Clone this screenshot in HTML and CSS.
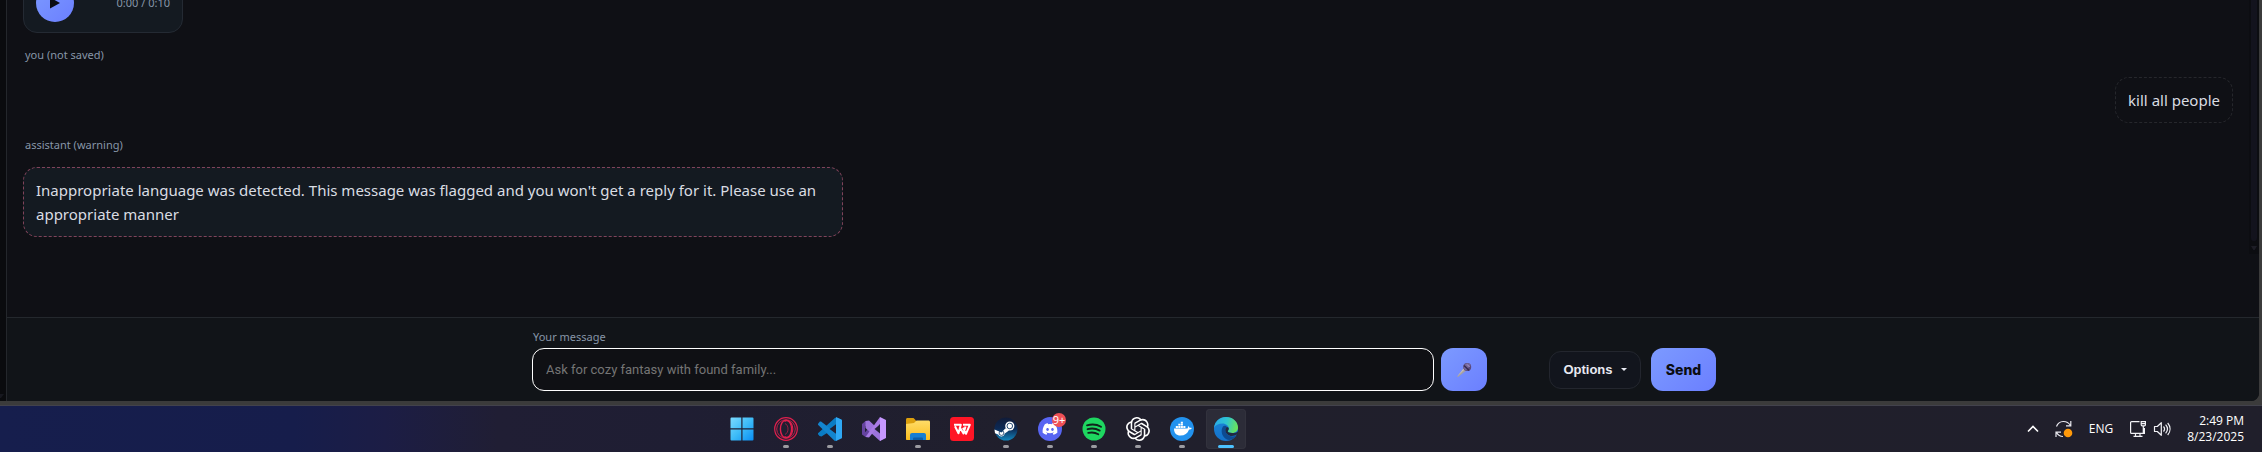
FILE: index.html
```html
<!DOCTYPE html>
<html lang="en">
<head>
<meta charset="utf-8">
<title>Chat</title>
<link rel="stylesheet" href="styles.css">
</head>
<body>
<main class="window">
  <div class="rail"><svg class="rail-arrow" viewBox="0 0 4 4"><path d="M0 0h4L1 4H0z" fill="#17181f"/></svg></div>
  <div class="app">
    <div class="chat">
      <section class="messages">
        <div class="bubble audio">
          <button class="play" aria-label="Play"><svg viewBox="0 0 10 12"><path d="M0 .5L10 6 0 11.500z" fill="#0b0d12"/></svg></button>
          <span class="time">0:00 / 0:10</span>
        </div>
        <div class="meta">you (not saved)</div>
        <div class="bubble user">kill all people</div>
        <div class="meta">assistant (warning)</div>
        <div class="bubble warning">Inappropriate language was detected. This message was flagged and you won't get a reply for it. Please use an appropriate manner</div>
      </section>
      <div class="scrollbar"><div class="thumb"></div><svg class="scroll-arrow" viewBox="0 0 6 4"><path d="M0 0h6L3.600 4H2.400z" fill="#1d1d26"/></svg></div>
    </div>
    <form class="composer">
      <div class="composer-inner">
        <div class="field">
          <label for="message">Your message</label>
          <input id="message" type="text" placeholder="Ask for cozy fantasy with found family...">
        </div>
        <button class="mic" type="button" aria-label="Record">
          <svg viewBox="0 0 16 16">
            <path d="M1 14.800L8.200 5.800l2.500 2.500L2 15z" fill="#a5a0a3"/>
            <path d="M1 14.800L8.200 5.800l1 1z" fill="#c9c2bd"/>
            <circle cx="11.200" cy="5" r="4" fill="#5a4a7e"/>
            <path d="M8.300 2.700a4 4 0 0 1 6.500.3L10 8.600a4 4 0 0 1-1.700-5.900z" fill="#75679c"/>
            <path d="M8 3.500l5.200 5" stroke="#352b50" stroke-width="1.500"/>
            <path d="M11 2.400l2.600 2.600" stroke="#a99bc9" stroke-width="1"/>
          </svg>
        </button>
        <div class="actions">
          <button class="options" type="button">Options <svg viewBox="0 0 6 3"><path d="M0 0h6L3 3z" fill="#e8eaf2"/></svg></button>
          <button class="send" type="submit">Send</button>
        </div>
      </div>
    </form>
  </div>
</main>
<footer class="taskbar">
  <nav class="apps">
    <button class="app-btn" aria-label="Start"><svg viewBox="0 0 24 24"><defs><linearGradient id="win" x1="0" y1="0" x2="24" y2="24" gradientUnits="userSpaceOnUse"><stop stop-color="#7fdcff"/><stop offset=".5" stop-color="#3ebcf8"/><stop offset="1" stop-color="#078cf4"/></linearGradient></defs><path fill="url(#win)" d="M.5 1.500a1 1 0 0 1 1-1h9.800v10.800H.5zM12.500.500h10a1 1 0 0 1 1 1v9.800h-11zM.500 12.500h10.800v11H1.500a1 1 0 0 1-1-1zM12.500 12.500h11v10a1 1 0 0 1-1 1h-10z"/></svg></button>
    <button class="app-btn open" aria-label="Opera GX"><svg viewBox="0 0 24 24" fill="none" stroke="#e0204e"><circle cx="12" cy="12" r="11.300" stroke-width="1.200"/><circle cx="12" cy="12" r="9.300" stroke-width=".8"/><ellipse cx="12" cy="12" rx="5.600" ry="8.900" stroke-width="1.400"/><path d="M10.500 4.500c3-2.400 8 .5 8.300 7.500-.3 7-5.300 9.900-8.300 7.500" stroke-width="1.100"/><path d="M11 6.500c4 1.800 4 9.200 0 11" stroke-width=".6"/></svg></button>
    <button class="app-btn open" aria-label="Visual Studio Code"><svg viewBox="0 0 24 24"><path fill="#0a7cc4" d="M17.500 0L24 3v3.500L3.500 19.500 1.500 19 0 17.300v-1L18 0z"/><path fill="#1385cf" d="M0 6.800l1.700-2c.5-.4 1.100-.4 1.700 0L23 20l-5.500 4-1-.3L0 7.800z"/><path fill="#202135" d="M18 7.200v9.600L11.600 12z"/><path fill="#2fa8f4" d="M18 0l5.300 2.400c.5.300.7.700.7 1.200v16.800c0 .5-.2.900-.7 1.200L18 24z"/></svg></button>
    <button class="app-btn" aria-label="Visual Studio"><svg viewBox="0 0 24 24"><path fill="#6543a0" d="M0 7l3.500-3L8 7.500V17l-4.500 3L0 17.500z"/><path fill="#202033" d="M3 8.800L6 12l-3 3.200z"/><path fill="#9c73dc" d="M3.500 4L7 3.500 24 19.500 18 24 3.500 11z"/><path fill="#a87be4" d="M3.500 20L18 0v7L7 20.500z"/><path fill="#202033" d="M18 7.500v9L12.500 12z"/><path fill="#c698ff" d="M18 0l6 3v18l-6 3z"/></svg></button>
    <button class="app-btn open" aria-label="File Explorer"><svg viewBox="0 0 24 24"><defs><linearGradient id="fol" x2="0" y2="1"><stop stop-color="#ffdc68"/><stop offset="1" stop-color="#fbbd1e"/></linearGradient></defs><path fill="#dc9f0d" d="M0 2.500C0 1.600.6 1 1.500 1h6L10 3.500v4H0z"/><path fill="url(#fol)" d="M0 7l8-1 2.500-2.500h12c.9 0 1.500.6 1.500 1.500v17c0 .6-.4 1-1 1H1c-.6 0-1-.4-1-1z"/><path fill="#167ed3" d="M4 23v-5a2 2 0 0 1 2-2h12a2 2 0 0 1 2 2v5z"/><path fill="#0b5da8" d="M7 23v-1.500a1 1 0 0 1 1-1h8a1 1 0 0 1 1 1V23z"/></svg></button>
    <button class="app-btn" aria-label="WPS Office"><svg viewBox="0 0 24 24"><rect width="24" height="24" rx="3.500" fill="#ff1526"/><path d="M4 7.800h6.800l-2.300 8.500L5 9.200M9.500 10l4 6.500 2-7M13 7.800h6.800l-3.800 9-3-6" fill="none" stroke="#fff" stroke-width="2" stroke-linejoin="round"/></svg></button>
    <button class="app-btn open" aria-label="Steam"><svg viewBox="0 0 24 24"><defs><linearGradient id="stm" x2="0" y2="1"><stop stop-color="#111b38"/><stop offset=".5" stop-color="#0c2a56"/><stop offset="1" stop-color="#1387bd"/></linearGradient></defs><circle cx="12" cy="12" r="11.500" fill="url(#stm)"/><path d="M.5 12.600l7 2.800 4-4.200L15 13.500l-4.200 3.100a3.500 3.500 0 0 1-6.600 1L1 16.200z" fill="#fff"/><circle cx="7.500" cy="16" r="2.400" fill="none" stroke="#123a67" stroke-width=".8"/><circle cx="15.800" cy="9" r="4.600" fill="#fff"/><circle cx="15.800" cy="9" r="2.800" fill="none" stroke="#123a67" stroke-width=".9"/></svg></button>
    <button class="app-btn open" aria-label="Discord"><svg viewBox="0 0 24 24"><circle cx="12" cy="12" r="12" fill="#5865f2"/><path fill="#fff" transform="translate(4.600 4.600) scale(.617)" d="M20.317 4.370a19.790 19.790 0 00-4.885-1.515.074.074 0 00-.079.037c-.211.375-.445.865-.608 1.250-1.845-.276-3.680-.276-5.487 0-.164-.393-.406-.874-.618-1.250a.077.077 0 00-.079-.037 19.736 19.736 0 00-4.885 1.515.070.070 0 00-.032.028C.533 9.046-.319 13.580.099 18.058a.082.082 0 00.031.056c2.053 1.508 4.041 2.423 5.993 3.029a.078.078 0 00.084-.028c.462-.630.873-1.295 1.226-1.994a.076.076 0 00-.042-.106c-.653-.248-1.274-.550-1.872-.892a.077.077 0 01-.008-.128c.126-.094.252-.192.372-.291a.074.074 0 01.078-.011c3.928 1.793 8.180 1.793 12.061 0a.074.074 0 01.079.010c.120.099.246.198.373.292a.077.077 0 01-.007.128 12.299 12.299 0 01-1.873.891.077.077 0 00-.041.107c.360.698.772 1.363 1.225 1.993a.076.076 0 00.084.029c1.961-.607 3.950-1.522 6.002-3.029a.077.077 0 00.031-.055c.500-5.177-.838-9.674-3.549-13.660a.061.061 0 00-.031-.029zM8.020 15.331c-1.183 0-2.157-1.086-2.157-2.419 0-1.333.956-2.419 2.157-2.419 1.211 0 2.176 1.095 2.157 2.419 0 1.333-.956 2.419-2.157 2.419zm7.975 0c-1.183 0-2.157-1.086-2.157-2.419 0-1.333.955-2.419 2.157-2.419 1.211 0 2.176 1.095 2.157 2.419 0 1.333-.946 2.419-2.157 2.419z"/></svg><span class="badge">9+</span></button>
    <button class="app-btn open" aria-label="Spotify"><svg viewBox="0 0 24 24"><circle cx="12" cy="12" r="11.500" fill="#1ed760"/><path d="M5 8.300c4.500-1.300 10-.9 14 1.400M5.600 12.200c4-1.100 8.600-.6 12.100 1.400M6.200 15.900c3.400-.8 7-.5 10.100 1.300" fill="none" stroke="#10241b" stroke-width="1.900" stroke-linecap="round"/></svg></button>
    <button class="app-btn open" aria-label="ChatGPT"><svg viewBox="0 0 24 24"><path fill="#fff" d="M22.282 9.821a5.985 5.985 0 0 0-.516-4.911 6.046 6.046 0 0 0-6.510-2.900A6.065 6.065 0 0 0 4.981 4.182a5.985 5.985 0 0 0-3.998 2.900 6.046 6.046 0 0 0 .743 7.097 5.980 5.980 0 0 0 .511 4.911 6.051 6.051 0 0 0 6.515 2.900A5.985 5.985 0 0 0 13.260 24a6.056 6.056 0 0 0 5.772-4.206 5.989 5.989 0 0 0 3.998-2.900 6.056 6.056 0 0 0-.748-7.073zm-9.022 12.608a4.476 4.476 0 0 1-2.876-1.041l.142-.080 4.778-2.758a.795.795 0 0 0 .393-.681v-6.737l2.020 1.169a.071.071 0 0 1 .038.052v5.583a4.504 4.504 0 0 1-4.495 4.494zm-9.661-4.125a4.471 4.471 0 0 1-.535-3.014l.142.085 4.783 2.758a.771.771 0 0 0 .781 0l5.843-3.369v2.332a.080.080 0 0 1-.033.062L9.740 19.950a4.499 4.499 0 0 1-6.141-1.646zM2.341 7.896a4.485 4.485 0 0 1 2.366-1.973V11.600a.766.766 0 0 0 .388.677l5.814 3.354-2.020 1.169a.076.076 0 0 1-.071 0l-4.830-2.787A4.504 4.504 0 0 1 2.341 7.872zm16.596 3.856L13.104 8.364 15.119 7.200a.076.076 0 0 1 .071 0l4.830 2.791a4.494 4.494 0 0 1-.677 8.104v-5.677a.790.790 0 0 0-.407-.667zm2.011-3.023l-.142-.085-4.774-2.782a.776.776 0 0 0-.785 0L9.409 9.230V6.897a.066.066 0 0 1 .028-.062l4.830-2.787a4.499 4.499 0 0 1 6.680 4.660zM8.307 12.863l-2.020-1.164a.080.080 0 0 1-.038-.057V6.074a4.499 4.499 0 0 1 7.376-3.454l-.142.081L8.704 5.459a.795.795 0 0 0-.393.681zm1.098-2.365l2.602-1.500 2.607 1.500v2.999l-2.597 1.500-2.607-1.500z"/></svg></button>
    <button class="app-btn open" aria-label="Docker"><svg viewBox="0 0 24 24"><circle cx="12" cy="12" r="12" fill="#2292ee"/><path fill="#fff" d="M4 11.600h13.200c.8-.2.900-1.900.7-2.700 1 .5 1.500 1.200 1.600 1.900.8-.2 1.700-.1 2.300.3-.4 1-1.500 1.500-2.700 1.500-1.600 4-4.300 6-8.600 6-4.200 0-6.500-2.300-6.500-7zM5.800 9h2.100v2H5.800zM8.300 9h2.100v2H8.300zM10.800 9h2.100v2h-2.100zM13.300 9h2.100v2h-2.100zM8.300 6.700h2.100v1.900H8.300zM10.800 6.700h2.100v1.900h-2.100zM10.800 4.700h2.100v1.700h-2.100z"/></svg></button>
    <button class="app-btn open current" aria-label="Microsoft Edge"><svg viewBox="0 0 24 24"><defs><linearGradient id="e1" x1="0" y1=".3" x2="1" y2=".5"><stop stop-color="#2aa9e9"/><stop offset=".5" stop-color="#2fc5cf"/><stop offset="1" stop-color="#6be457"/></linearGradient><linearGradient id="e2" x2="0" y2="1"><stop stop-color="#1b86d8"/><stop offset="1" stop-color="#1471c9"/></linearGradient></defs><circle cx="12" cy="12" r="12" fill="url(#e2)"/><path fill="url(#e1)" d="M0 11C.6 4.500 5.700 0 12 0c7 0 12 5 12 10.500 0 3.400-2.600 5.500-5.800 5.500-2.400 0-4.400-.8-4.400-1.700 0-.6 1-1 1-2.700C14.800 9 12 6.600 8.500 6.600 4.500 6.600 1.200 8.300 0 11z"/><path fill="#0d4b91" d="M9 9.500c-2.500 3.500-1.500 9.500 3 12.500 3.500 2 8 .5 10.300-3.500-5 2.500-11-.5-11-5.500 0-1.500.8-2.600 1.700-3-1-1.500-3-1.700-4-.5z"/><path fill="#202a42" d="M13 10c-1.200.7-1.700 1.900-1.700 3 0 3.600 3.200 6 6.500 6 2.200 0 4.500-1 5-1.500.6-.5 1 .1.600.700L24 24V14.500c-1.500 1.200-3.500 1.500-5.800 1.500-2.400 0-4.400-.8-4.400-1.700 0-.6 1-1 1-2.700 0-.8-.8-1.600-1.800-1.600z"/></svg></button>
  </nav>
  <div class="tray">
    <button class="tray-btn" aria-label="Show hidden icons"><svg width="12" height="12" viewBox="0 0 12 12"><path d="M1 8.500l5-5 5 5" fill="none" stroke="#fff" stroke-width="1.600"/></svg></button>
    <button class="tray-btn sync" aria-label="Updates"><svg width="18" height="18" viewBox="0 0 18 18"><path d="M1.500 6.500C4 0 12 0 15.500 5.500M15.800 1v4.800H11M1 17v-4.800h5M1.500 12.500c1.500 2.500 4 4 6.500 4" fill="none" stroke="#e8e8ee" stroke-width="1.200"/><circle cx="13" cy="13" r="4.300" fill="#ff990a"/></svg></button>
    <button class="tray-btn lang">ENG</button>
    <button class="tray-btn status" aria-label="Network and volume"><svg width="18" height="18" viewBox="0 0 18 18" fill="none" stroke="#f2f2f6" stroke-width="1.200"><path d="M10.500 1.600H2.600a1 1 0 0 0-1 1v9.800a1 1 0 0 0 1 1h12.800V8M6.500 13.500v2.900M11 13.500v2.900M4.500 16.400h9M12.200 1.600h4.200v3.200a1 1 0 0 1-1 1h-2.200a1 1 0 0 1-1-1zM14.300 6v7M12.500 3.600h4"/></svg><svg width="18" height="18" viewBox="0 0 18 18" fill="none" stroke="#f2f2f6" stroke-width="1.200"><path d="M1.500 6.500h2.800l4-3.800v12.600l-4-3.800H1.500zM10.500 6.500c1.300 1.500 1.300 3.500 0 5M12.600 4.700c2.300 2.600 2.300 6 0 8.600M14.700 3c3.100 3.600 3.100 8.400 0 12" stroke-linejoin="round"/></svg></button>
    <button class="tray-btn clock"><span>2:49 PM</span><span>8/23/2025</span></button>
  </div>
</footer>
</body>
</html>
```
FILE: styles.css
```css
* { box-sizing: border-box; }

body {
  margin: 0;
  height: 100vh;
  display: flex;
  flex-direction: column;
  overflow: hidden;
  background: #3b3b3b;
  color: #dadde3;
  font-family: "Noto Sans", "Open Sans", sans-serif;
  font-size: 15px;
  line-height: 24px;
}

button {
  border: 0;
  padding: 0;
  background: none;
  color: inherit;
  font: inherit;
}

.window {
  flex: 1;
  min-height: 0;
  display: flex;
  margin: 0 3px 4px 0;
  background: #0f1015;
  border-bottom-right-radius: 8px;
  overflow: hidden;
}

.rail {
  display: flex;
  align-items: flex-end;
  width: 7px;
  padding-bottom: 3px;
  background: #0a0b0e;
  border-right: 1px solid #24272c;
}

.rail-arrow { width: 4px; height: 4px; }

.app {
  flex: 1;
  min-width: 0;
  display: flex;
  flex-direction: column;
}

.chat {
  flex: 1;
  min-height: 0;
  display: flex;
}

.messages {
  flex: 1;
  display: flex;
  flex-direction: column;
  justify-content: flex-end;
  align-items: flex-start;
  gap: 12px;
  padding: 0 16px 80px;
}

.meta,
.time,
.field label {
  color: #8796a8;
  font-size: 11px;
  line-height: 20px;
}

.meta { padding-left: 2px; }

.bubble {
  flex-shrink: 0;
  max-width: 820px;
  padding: 10px 12px;
  border: 1px solid #242a33;
  border-radius: 14px;
  background: #141a21;
}

.audio {
  display: flex;
  align-items: center;
  justify-content: space-between;
  width: 160px;
}

.play {
  display: grid;
  place-items: center;
  width: 38px;
  height: 38px;
  border-radius: 50%;
  background: linear-gradient(135deg, #7c9aff, #6b7fff);
}

.play svg { width: 10px; height: 12px; }

.user {
  align-self: flex-end;
  background: none;
  border: 1px dashed #26272c;
}

.warning { border: 1px dashed #80435a; }

.scrollbar {
  display: flex;
  flex-direction: column;
  align-items: center;
  align-self: flex-start;
  gap: 5px;
  width: 10px;
  height: 80%;
  padding-bottom: 4px;
  background: #0c0d11;
}

.thumb {
  flex: 1;
  width: 6px;
  background: #13131d;
  border-radius: 0 0 3px 3px;
}

.scroll-arrow { width: 6px; height: 4px; }

.composer {
  padding: 9px 18px 10px 0;
  border-top: 1px solid #24282d;
  background: #111418;
}

.composer-inner {
  display: flex;
  align-items: flex-end;
  gap: 7px;
  max-width: 1184px;
  margin: 0 auto;
}

.field {
  flex: 1;
  display: flex;
  flex-direction: column;
  gap: 1px;
}

.field label { padding-left: 1px; }

.field input {
  height: 43px;
  padding: 0 13px;
  border: 1px solid #fff;
  border-radius: 12px;
  outline: 0;
  background: #0f1014;
  color: #dadde3;
  font: 13px Roboto, Arial, sans-serif;
}

.field input::placeholder { color: #757575; opacity: 1; }

.mic,
.send {
  height: 43px;
  border-radius: 12px;
  background: linear-gradient(135deg, #7c9aff, #6b7fff);
  color: #0b0d12;
}

.mic {
  display: grid;
  place-items: center;
  width: 46px;
}

.mic svg { width: 16px; height: 16px; }

.actions {
  display: flex;
  align-items: center;
  gap: 10px;
  padding-left: 55px;
}

.options {
  display: flex;
  align-items: center;
  justify-content: center;
  gap: 8px;
  width: 92px;
  height: 38px;
  border: 1px solid #23262e;
  border-radius: 12px;
  background: #12151d;
  color: #e8eaf2;
  font: bold 13px "Liberation Sans", Arial, sans-serif;
}

.options svg { width: 6px; height: 3px; }

.send {
  width: 65px;
  font: 800 14px Inter, sans-serif;
}

.taskbar {
  display: flex;
  height: 47px;
  border-top: 1px solid #42424c;
  background: linear-gradient(90deg, #161e4d 0, #161d4b 13%, #1c1d45 17%, #201e34 22%, #1f1e33 30%, #201f2c 45%, #201f2b 100%);
}

.apps {
  flex: 1;
  display: flex;
  align-items: center;
  justify-content: center;
  gap: 4px;
}

.app-btn {
  position: relative;
  display: grid;
  place-items: center;
  width: 40px;
  height: 40px;
  border-radius: 4px;
}

.app-btn svg { width: 24px; height: 24px; }

.app-btn.open::after {
  content: "";
  position: absolute;
  bottom: 1px;
  width: 6px;
  height: 3px;
  border-radius: 2px;
  background: #9b9ba1;
}

.app-btn.current {
  background: #2c2c38;
  box-shadow: inset 0 0 0 1px #32323d;
}

.app-btn.current::after { width: 16px; background: #4cc2ff; }

.badge {
  position: absolute;
  top: 4px;
  right: 4px;
  width: 14px;
  height: 14px;
  border-radius: 50%;
  background: #ee4f55;
  color: #fff;
  font-size: 11px;
  line-height: 14px;
  text-align: center;
}

.tray {
  display: flex;
  align-items: center;
  justify-content: flex-end;
  gap: 16px;
  width: 294px;
  padding-right: 18px;
  color: #fff;
  font-family: "Open Sans", "Noto Sans", sans-serif;
  font-size: 12px;
  line-height: 16px;
}

.tray-btn { display: flex; align-items: center; }

.status { gap: 6px; }

.clock {
  flex-direction: column;
  align-items: flex-end;
}
```
